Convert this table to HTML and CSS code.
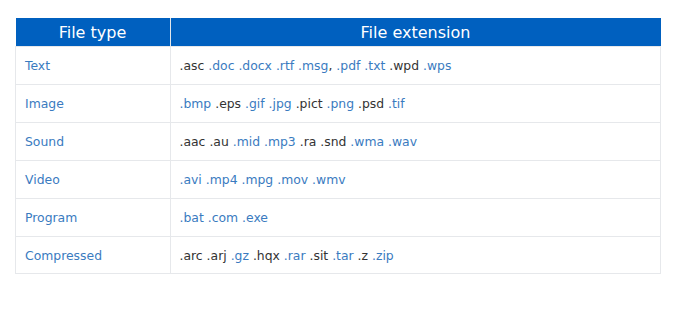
FILE: index.html
```html
<!DOCTYPE html>
<html>
<head>
<meta charset="utf-8">
<link rel="stylesheet" href="styles.css">
</head>
<body>
<div class="wrap">
<table class="ft">
<thead>
<tr><th class="c1">File type</th><th class="c2">File extension</th></tr>
</thead>
<tbody>
<tr><td class="type">Text</td><td>.asc <span class="l">.doc</span> <span class="l">.docx</span> <span class="l">.rtf</span> <span class="l">.msg</span>, <span class="l">.pdf</span> <span class="l">.txt</span> .wpd <span class="l">.wps</span></td></tr>
<tr><td class="type">Image</td><td><span class="l">.bmp</span> .eps <span class="l">.gif</span> <span class="l">.jpg</span> .pict <span class="l">.png</span> .psd <span class="l">.tif</span></td></tr>
<tr><td class="type">Sound</td><td>.aac .au <span class="l">.mid</span> <span class="l">.mp3</span> .ra .snd <span class="l">.wma</span> <span class="l">.wav</span></td></tr>
<tr><td class="type">Video</td><td><span class="l">.avi</span> <span class="l">.mp4</span> <span class="l">.mpg</span> <span class="l">.mov</span> <span class="l">.wmv</span></td></tr>
<tr><td class="type">Program</td><td><span class="l">.bat</span> <span class="l">.com</span> <span class="l">.exe</span></td></tr>
<tr><td class="type">Compressed</td><td>.arc .arj <span class="l">.gz</span> .hqx <span class="l">.rar</span> .sit <span class="l">.tar</span> .z <span class="l">.zip</span></td></tr>
</tbody>
</table>
</div>
</body>
</html>
```
FILE: styles.css
```css
html, body { margin: 0; padding: 0; background: #fff; }
body { font-family: "DejaVu Sans", Verdana, sans-serif; }
.wrap { padding: 18px 0 0 15px; }
.ft { border-collapse: collapse; width: 646px; table-layout: fixed; }
.ft th { background: #0060bf; color: #fff; font-weight: normal; font-size: 16px; height: 28px; padding: 0; text-align: center; border-left: 1px solid #e2e6ea; }
.ft th.c1 { width: 154px; border-left: none; }
.ft td { border: 1px solid #e6e8eb; height: 37px; padding: 0 0 0 9px; font-size: 12.4px; color: #333; }
.ft tbody tr:last-child td { height: 36px; }
.ft td.type { color: #3a7bbf; }
.l { color: #3a7bbf; }
```
